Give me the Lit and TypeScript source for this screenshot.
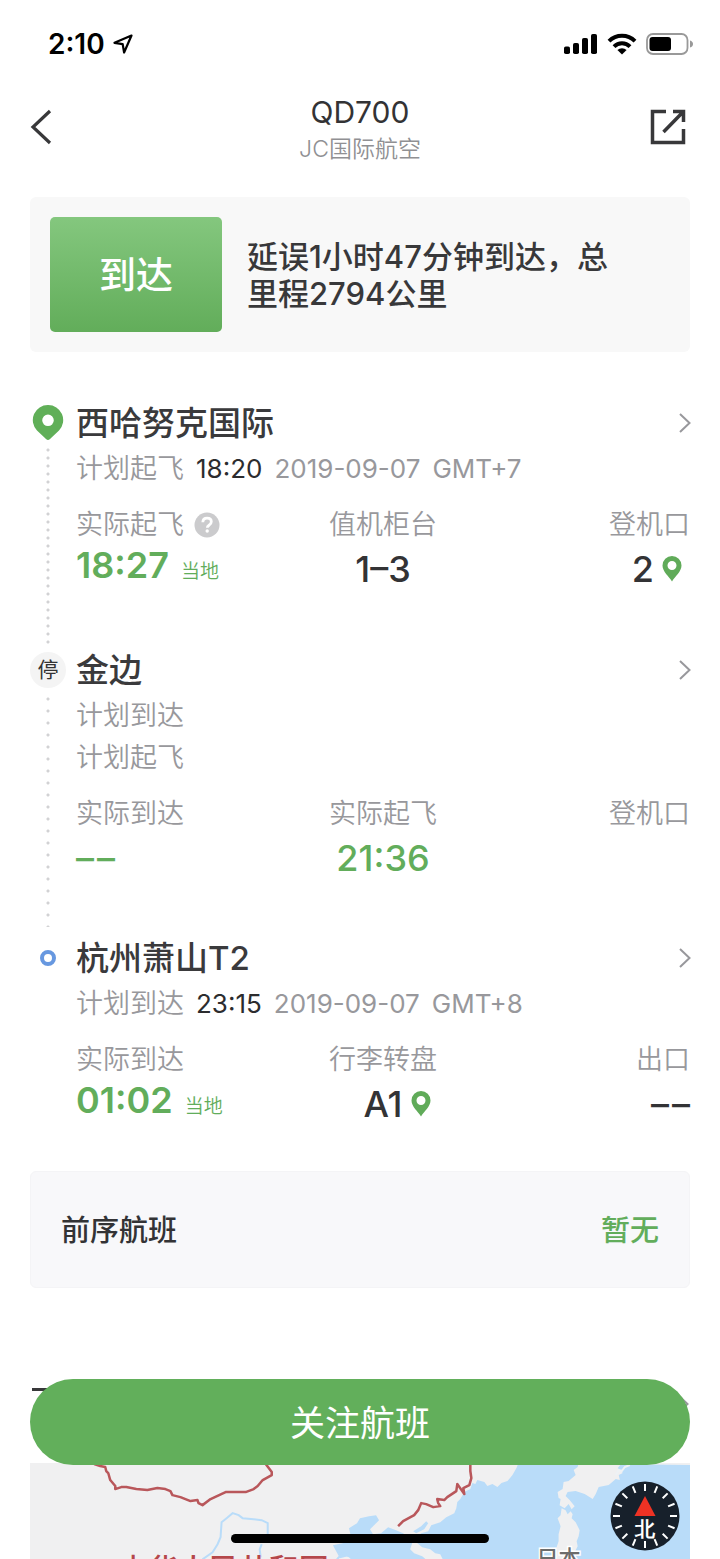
import { LitElement, html, svg, css, nothing } from "lit";
import { customElement, property } from "lit/decorators.js";

interface Cell {
  label: string;
  value: string;
  tone?: "green" | "dark";
  local?: boolean;
  help?: boolean;
  pin?: boolean;
}

interface Stop {
  kind: "start" | "via" | "end";
  name: string;
  plans: { label: string; time?: string; date?: string; zone?: string }[];
  cells: Cell[];
}

const STOPS: Stop[] = [
  {
    kind: "start",
    name: "西哈努克国际",
    plans: [{ label: "计划起飞", time: "18:20", date: "2019-09-07", zone: "GMT+7" }],
    cells: [
      { label: "实际起飞", value: "18:27", tone: "green", local: true, help: true },
      { label: "值机柜台", value: "1–3" },
      { label: "登机口", value: "2", pin: true },
    ],
  },
  {
    kind: "via",
    name: "金边",
    plans: [{ label: "计划到达" }, { label: "计划起飞" }],
    cells: [
      { label: "实际到达", value: "––", tone: "green" },
      { label: "实际起飞", value: "21:36", tone: "green" },
      { label: "登机口", value: "" },
    ],
  },
  {
    kind: "end",
    name: "杭州萧山T2",
    plans: [{ label: "计划到达", time: "23:15", date: "2019-09-07", zone: "GMT+8" }],
    cells: [
      { label: "实际到达", value: "01:02", tone: "green", local: true },
      { label: "行李转盘", value: "A1", pin: true },
      { label: "出口", value: "––" },
    ],
  },
];

const chevron = html`<svg width="14" height="22" viewBox="0 0 14 22" overflow="visible" fill="none" stroke="#98989c" stroke-width="2" aria-hidden="true"><path d="M4 2l9.500 9L4 20"/></svg>`;

@customElement("status-bar")
class StatusBar extends LitElement {
  static styles = css`
    :host { display: flex; justify-content: space-between; align-items: center; height: 88px; padding: 0 26px 0 48px; }
    .group { display: flex; align-items: center; gap: 8px; }
    .time { font-size: 28px; line-height: 36px; font-weight: 600; color: #000; }
    svg { display: block; }
  `;
  render() {
    return html`
      <div class="group">
        <span class="time">2:10</span>
        <svg width="20" height="20" viewBox="0 0 20 20" fill="none" stroke="#000" stroke-width="2.200" stroke-linejoin="round"><path d="M18.500 1.500L1.500 8.800l8.200 1.400 1.400 8.300z"/></svg>
      </div>
      <div class="group">
        <svg width="34" height="22" viewBox="0 0 34 22"><rect x="0" y="13.500" width="6" height="7.500" rx="1.800"/><rect x="9" y="10" width="6" height="11" rx="1.800"/><rect x="18" y="5" width="6" height="16" rx="1.800"/><rect x="27" y="1" width="6" height="20" rx="1.800"/></svg>
        <svg width="32" height="22" viewBox="0 0 32 22" fill="none" stroke="#000" stroke-width="4"><path d="M3 8.200a18.500 18.500 0 0 1 26 0"/><path d="M8 13.600a11.500 11.500 0 0 1 16 0"/><path d="M16 21.500l-4.600-4.400a6.800 6.800 0 0 1 9.200 0z" fill="#000" stroke="none"/></svg>
        <svg width="48" height="22" viewBox="0 0 48 22"><rect x="1" y="1" width="40.500" height="20" rx="6" fill="none" stroke="#999" stroke-width="1.800"/><rect x="3.500" y="4" width="21.500" height="14" rx="3" fill="#000"/><path d="M44 7.500q3 1 3 3.500t-3 3.500z" fill="#999"/></svg>
      </div>
    `;
  }
}

@customElement("flight-stop")
class FlightStop extends LitElement {
  @property({ attribute: false }) stop!: Stop;

  static styles = css`
    :host { display: grid; grid-template-columns: 36px 1fr; column-gap: 10px; }
    svg { display: block; flex: none; }
    .rail { display: flex; flex-direction: column; align-items: center; }
    .marker { display: flex; align-items: center; justify-content: center; height: 46px; }
    .via-dot { display: flex; align-items: center; justify-content: center; width: 36px; height: 36px; border-radius: 50%; background: #f4f4f4; color: #333; font-size: 21px; line-height: 36px; }
    .ring { box-sizing: border-box; width: 16px; height: 16px; border: 4px solid #6798e0; border-radius: 50%; }
    .line { flex: 1; width: 4px; background: radial-gradient(circle, #d2d2d4 1px, transparent 2px) center top / 4px 8px repeat-y; }
    .line.via { background-size: 4px 12px; margin-bottom: 8px; }
    .body { min-width: 0; padding-bottom: 56px; }
    .body.via { padding-bottom: 55px; }
    .body.end { padding-bottom: 0; }
    .title { display: flex; align-items: center; justify-content: space-between; height: 46px; margin-bottom: 2px; color: #3a3a3c; text-decoration: none; }
    h2 { margin: 0; font-size: 33px; line-height: 46px; font-weight: 500; }
    .plan { display: flex; gap: 12px; font-size: 26px; line-height: 42px; color: #98989c; }
    .label-text { font-size: 27px; font-weight: 350; }
    .plan .time { color: #2c2c2e; }
    .cells { display: grid; grid-template-columns: repeat(3, 1fr); margin-top: 17px; }
    .cell { display: flex; flex-direction: column; align-items: flex-start; gap: 4px; }
    .cell:nth-child(2) { align-items: center; }
    .cell:nth-child(3) { align-items: flex-end; }
    .label { display: flex; align-items: center; gap: 10px; height: 36px; line-height: 36px; color: #98989c; }
    .value { display: flex; align-items: center; gap: 8px; min-height: 44px; font-size: 36px; line-height: 44px; font-weight: 500; color: #333335; }
    .green { color: #62ad5b; }
    .dashes { display: flex; gap: 3px; }
    .localtime { gap: 12px; min-height: 36px; line-height: 36px; font-weight: 600; align-items: baseline; }
    .local { font-size: 19px; font-weight: 350; }
    .cell:nth-child(2) .pinned { padding-left: 28px; }
    .cell:nth-child(3) .pinned { padding-right: 8px; }
    .help { display: flex; padding: 0; border: 0; background: none; }
  `;

  private marker() {
    if (this.stop.kind === "start")
      return html`<svg width="32" height="38" viewBox="0 0 32 38"><path fill-rule="evenodd" fill="#60af58" d="M16 1a15 15 0 0 1 11 25.400L18 35q-2 2-4 0L5 26.400A15 15 0 0 1 16 1zm0 9.500a5.800 5.800 0 1 0 0 11.600a5.800 5.800 0 0 0 0-11.600z"/></svg>`;
    if (this.stop.kind === "via") return html`<span class="via-dot">停</span>`;
    return html`<span class="ring"></span>`;
  }

  private cell(c: Cell) {
    return html`
      <div class="cell">
        <div class="label">
          <span class="label-text">${c.label}</span>
          ${c.help
            ? html`<button class="help" aria-label="说明"><svg width="26" height="26" viewBox="0 0 26 26"><circle cx="13" cy="13" r="12.500" fill="#cbcbcd"/><path d="M8.800 10.200q.2-4 4.300-4 4.200 0 4.200 3.600 0 2-2.300 3.400-1.700 1-1.700 2.600" fill="none" stroke="#fff" stroke-width="2.800"/><circle cx="13.200" cy="19" r="1.700" fill="#fff"/></svg></button>`
            : nothing}
        </div>
        <div class="value ${c.tone === "green" ? "green" : ""} ${c.local ? "localtime" : ""} ${c.pin ? "pinned" : ""}">
          ${c.value === "––" ? html`<span class="dashes"><span>–</span><span>–</span></span>` : html`<span>${c.value}</span>`}
          ${c.local ? html`<span class="local">当地</span>` : nothing}
          ${c.pin
            ? html`<svg width="20" height="26" viewBox="0 0 20 26"><path fill-rule="evenodd" fill="#60ab59" d="M10 0a9.500 9.500 0 0 1 9.500 9.500c0 6-6.500 11-9.500 16C7 20.500.5 15.500.5 9.500A9.500 9.500 0 0 1 10 0zm0 5a4.500 4.500 0 1 0 0 9a4.500 4.500 0 0 0 0-9z"/></svg>`
            : nothing}
        </div>
      </div>
    `;
  }

  render() {
    const s = this.stop;
    return html`
      <div class="rail">
        <div class="marker">${this.marker()}</div>
        ${s.kind !== "end" ? html`<div class="line ${s.kind}"></div>` : nothing}
      </div>
      <div class="body ${s.kind}">
        <a class="title" href="#"><h2>${s.name}</h2>${chevron}</a>
        ${s.plans.map(
          (p) => html`<div class="plan"><span class="label-text">${p.label}</span>${p.time
            ? html`<span class="time">${p.time}</span><span>${p.date}</span><span>${p.zone}</span>`
            : nothing}</div>`
        )}
        <div class="cells">${s.cells.map((c) => this.cell(c))}</div>
      </div>
    `;
  }
}

@customElement("route-map")
class RouteMap extends LitElement {
  static styles = css`
    :host { display: block; position: relative; overflow: hidden; background: #f0f0f1; }
    .map { display: block; width: 100%; height: 100%; }
    .country { font-size: 30px; font-weight: 500; fill: #b5474a; }
    .japan { font-size: 22px; font-weight: 500; fill: #6c6c6c; stroke: #fff; stroke-width: 3px; paint-order: stroke; }
    .compass { position: absolute; top: 18px; right: 10px; width: 70px; height: 70px; padding: 0; border: 0; background: none; }
    .compass svg { display: block; }
    .north { font-size: 20px; font-weight: 700; fill: #fff; }
  `;
  render() {
    const ticks = Array.from({ length: 16 }, (_, i) => i * 22.5);
    return html`
      <svg class="map" viewBox="31 1463 658 96" preserveAspectRatio="xMidYMin slice">
        <rect x="31" y="1463" width="658" height="96" fill="#f0f0f1"/>
        <path fill="#b9dcf9" d="M518 1463l-2 5-4 7-5 6-6 2-4 4-5-3-5 2-3-4-7-2-2 4-3-1-2 6-6 3-4 7-3 3-1 6-2 5-8 4-6 5-9 3-3 6-7 2-4 4-1 5 6 5 8 2 5 4 5 1 4 8H689v-97z"/>
        <path fill="#b9dcf9" d="M333 1545l14-3 4-6-2-8 8-5 3-5 9-2 7-1 3 5-5 5-4 4 3 5 8-1 7-6 8 3 7 3 6 5 3 5-2 6 4 4 8 3 6 5 2 5h-54l-10-3-10 1-8-8-8 2z"/>
        <path fill="#b9dcf9" d="M413 1531l8-5 5-5 2 2-4 6-8 4z"/>
        <path fill="#f0f0f1" d="M578 1463l-1 4-4 3 2 5-7 6-5 1-1 7-5 3 1 6 2 1-1 6 5 3 4-4 3 5 3-3-5-6-4-4 2-4 8-1 9 3 8 5 3-5 3-7 10-2 7-6 4 1-1-5 4-2-5-5 5-6z"/>
        <path fill="#f0f0f1" d="M561 1508l4 2 2 4 3-3 2 3-1 4 4 4 4 8-1 6-2 5 1 5-3 6-1 9h-20l1-8 4-12v-7l2-8-3-8 3-3z"/>
        <path fill="#b9dcf9" d="M355 1557l5-6 10 2 3 6h-18z"/>
        <path fill="none" stroke="#eef2f5" stroke-width="2" d="M615 1475l3-5 3 1 3-4 5-2"/>
        <g fill="none" stroke="#b9dcf9" stroke-width="2">
          <path d="M203 1559l10-7 5-8 3-7 1-15 5-4 6-5 6 2 4 3 11 1 8 1 6 3v11"/>
          <path d="M262 1544l-2 5 1 8M337 1559l6-6 6 3"/>
        </g>
        <g fill="none" stroke="#b9575b" stroke-width="2.500" stroke-linejoin="round">
          <path d="M95 1464l6 2 5 1 1 4 2 2 2 7 5 6v3l6-2h5l10 2 11 1 10-2 8 1 5 2 2 4 8 2 10 4 7-1 1 3 4 2 8-6 15-7h20l8-3 4-3 5-6 9-5v-3l-6-8"/>
          <path d="M470 1463v8l1 7-2 7-6 3 1 6-7-10-1 7-3 2-6 4-3 3-7-1 1 4 2 3-7 1-7-3-5-1-3 7-4 5-11 6-5 5"/>
        </g>
        <text class="country" x="119" y="1580">中华人民共和国</text>
        <text class="japan" x="536" y="1566">日本</text>
      </svg>
      <button class="compass" aria-label="指北针">
        <svg width="70" height="70" viewBox="-35 -35 70 70">
          <circle r="34.500" fill="#17202b"/>
          ${ticks.map((a) => svg`<path d="M0-32v7" stroke="#fff" stroke-width="2" transform="rotate(${a})"/>`)}
          <path d="M0-20L10.500 0h-21z" fill="#ee3224"/>
          <text class="north" x="0" y="20" text-anchor="middle">北</text>
        </svg>
      </button>
    `;
  }
}

@customElement("app-root")
class AppRoot extends LitElement {
  static styles = css`
    :host { display: flex; flex-direction: column; min-height: 100vh; background: #fff; color: #333335; font-family: Inter, "Noto Sans CJK SC", sans-serif; }
    button { font-family: inherit; cursor: pointer; }
    svg { display: block; }
    .nav { display: grid; grid-template-columns: 40px 1fr 40px; align-items: center; padding: 6px 30px 0; }
    .icon { display: flex; padding: 0 0 4px; border: 0; background: none; }
    .share { justify-content: flex-end; padding-right: 4px; }
    .heading { text-align: center; }
    h1 { margin: 0; font-size: 30px; line-height: 36px; font-weight: 400; }
    .airline { margin: 4px 0 0; font-size: 23px; line-height: 30px; font-weight: 350; color: #909093; }
    .main { display: flex; flex-direction: column; flex: 1; padding: 33px 30px 0; }
    .summary { display: flex; align-items: center; gap: 25px; padding: 20px 60px 20px 20px; border-radius: 6px; background: #f8f8f8; }
    .badge { box-sizing: border-box; flex: none; width: 172px; padding-top: 3px; border-radius: 5px; background: linear-gradient(#84c77e, #62ad5a); color: #fff; font-size: 37px; line-height: 112px; font-weight: 500; text-align: center; }
    .summary p { margin: 0; font-size: 31px; line-height: 37px; font-weight: 500; color: #38383a; }
    .route { margin-top: 48px; }
    .previous { display: flex; align-items: center; justify-content: space-between; margin-top: 45px; padding: 37px 30px 35px; border: 1px solid #f4f4f6; border-radius: 6px; background: #f8f8fa; font-size: 29px; line-height: 43px; font-weight: 500; }
    .none { color: #62ad5b; }
    .more { display: flex; align-items: center; justify-content: space-between; height: 46px; margin: 93px 0 36px; padding: 0 2px; }
    .stroke { width: 32px; height: 30px; border-top: 3px solid #38383a; }
    route-map { flex: 1; min-height: 96px; }
    .follow { position: fixed; left: 30px; right: 30px; bottom: 94px; height: 86px; padding: 0 0 4px; border: 0; border-radius: 43px; background: #62af5b; color: #fff; font-size: 35px; font-weight: 400; }
    .home { position: fixed; left: 50%; bottom: 16px; width: 258px; height: 9px; border-radius: 5px; background: #000; transform: translateX(-50%); }
  `;

  render() {
    return html`
      <status-bar></status-bar>
      <header class="nav">
        <button class="icon" aria-label="返回"><svg width="24" height="38" viewBox="0 0 24 38" fill="none" stroke="#38383a" stroke-width="3.200"><path d="M20 3L3 19l17 16"/></svg></button>
        <div class="heading">
          <h1>QD700</h1>
          <p class="airline">JC国际航空</p>
        </div>
        <button class="icon share" aria-label="分享"><svg width="36" height="36" viewBox="0 0 36 36" fill="none" stroke="#38383a" stroke-width="3.500"><path d="M16 2.500H2.500v31h31V20"/><path d="M23 2.500h10.500V13M33 3L13.500 23"/></svg></button>
      </header>
      <main class="main">
        <section class="summary">
          <div class="badge">到达</div>
          <p>延误1小时47分钟到达，总里程2794公里</p>
        </section>
        <section class="route">
          ${STOPS.map((s) => html`<flight-stop .stop=${s}></flight-stop>`)}
        </section>
        <section class="previous">
          <span>前序航班</span>
          <span class="none">暂无</span>
        </section>
        <div class="more"><span class="stroke"></span>${chevron}</div>
        <route-map></route-map>
      </main>
      <button class="follow">关注航班</button>
      <div class="home"></div>
    `;
  }
}
